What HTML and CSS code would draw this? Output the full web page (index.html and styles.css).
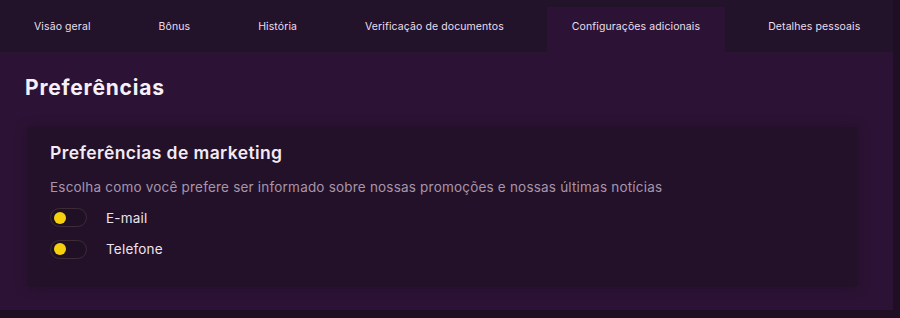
FILE: index.html
```
<!DOCTYPE html>
<html lang="pt">
<head>
<meta charset="utf-8">
<title>Preferências</title>
<link rel="stylesheet" href="styles.css">
</head>
<body>
<div class="page">
  <nav class="tabs">
    <a class="tab">Visão geral</a>
    <a class="tab">Bônus</a>
    <a class="tab">História</a>
    <a class="tab">Verificação de documentos</a>
    <a class="tab active">Configurações adicionais</a>
    <a class="tab">Detalhes pessoais</a>
  </nav>
  <main class="panel">
    <h1 class="title">Preferências</h1>
    <section class="card">
      <h2 class="card-title">Preferências de marketing</h2>
      <p class="card-desc">Escolha como você prefere ser informado sobre nossas promoções e nossas últimas notícias</p>
      <div class="options">
        <label class="option">
          <span class="toggle"><span class="knob"></span></span>
          <span class="option-label">E-mail</span>
        </label>
        <label class="option">
          <span class="toggle"><span class="knob"></span></span>
          <span class="option-label">Telefone</span>
        </label>
      </div>
    </section>
  </main>
</div>
</body>
</html>
```
FILE: styles.css
```
* { box-sizing: border-box; }
html, body { margin: 0; padding: 0; }
body {
  background: #1e0f24;
  font-family: "Inter", "Noto Sans", "Liberation Sans", sans-serif;
  width: 900px;
  height: 318px;
  overflow: hidden;
}
.page {
  width: 893px;
  background: #25122c;
}
.tabs {
  display: flex;
  gap: 18px;
  padding-left: 9px;
  height: 52px;
  background: #22122a;
  align-items: flex-end;
}
.tab {
  height: 45px;
  padding: 0 25px 7px;
  display: flex;
  align-items: center;
  justify-content: center;
  font-size: 10.5px;
  color: #eadfec;
  letter-spacing: 0.1px;
  white-space: nowrap;
}
.tab.active {
  background: #2c1335;
}
.panel {
  background: #2c1335;
  height: 258px;
  padding: 23px 35px 23px 27px;
  display: flex;
  flex-direction: column;
}
.title {
  margin: 0 0 0 -2px;
  font-size: 21px;
  font-weight: 700;
  letter-spacing: 0.8px;
  color: #f8f0f8;
  line-height: 26px;
}
.card {
  margin-top: 26px;
  background: #221129;
  border-radius: 4px;
  padding: 14px 23px 20px;
  flex: 1;
  box-shadow: 0 0 12px rgba(20, 8, 26, 0.35);
}
.card-title {
  margin: 0;
  font-size: 17.5px;
  font-weight: 600;
  letter-spacing: 0.4px;
  color: #f3eaf3;
  line-height: 24px;
}
.card-desc {
  margin: 13px 0 0;
  font-size: 13.5px;
  letter-spacing: 0.2px;
  color: #a895ab;
  line-height: 18px;
}
.options {
  margin-top: 12px;
  display: flex;
  flex-direction: column;
  gap: 12.5px;
}
.option {
  display: flex;
  align-items: center;
  gap: 19px;
}
.toggle {
  width: 37px;
  height: 19px;
  border-radius: 10px;
  border: 1.5px solid #3d2c35;
  background: #1f1025;
  display: flex;
  align-items: center;
  padding-left: 3px;
}
.knob {
  width: 12px;
  height: 12px;
  border-radius: 50%;
  background: #f5d10d;
}
.option-label {
  font-size: 13.5px;
  letter-spacing: 0.2px;
  color: #ece3ec;
}
```
